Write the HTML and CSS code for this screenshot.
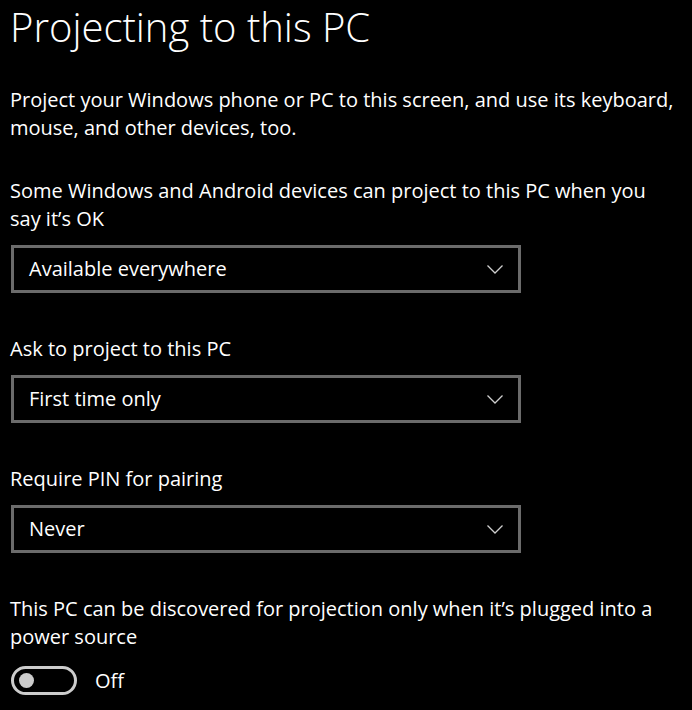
FILE: index.html
```html
<!DOCTYPE html>
<html lang="en">
<head>
    <meta charset="UTF-8">
    <meta name="viewport" content="width=device-width, initial-scale=1.0">
    <title>Projecting to this PC</title>
    <link rel="stylesheet" href="styles.css">
</head>
<body>
    <div class="page">
        <h1 class="title">Projecting to this PC</h1>

        <p class="intro">Project your Windows phone or PC to this screen, and use its keyboard, mouse, and other devices, too.</p>

        <!-- Settings -->
        <div class="setting">
            <p class="label">Some Windows and Android devices can project to this PC when you say it’s OK</p>
            <div class="dropdown">
                <span>Available everywhere</span>
                <svg class="chevron" width="16" height="9" viewBox="0 0 16 9"><path d="M0.5 0.5 L8 8 L15.5 0.5" fill="none" stroke="#cfcfcf" stroke-width="1.3"/></svg>
            </div>
        </div>

        <div class="setting">
            <p class="label">Ask to project to this PC</p>
            <div class="dropdown">
                <span>First time only</span>
                <svg class="chevron" width="16" height="9" viewBox="0 0 16 9"><path d="M0.5 0.5 L8 8 L15.5 0.5" fill="none" stroke="#cfcfcf" stroke-width="1.3"/></svg>
            </div>
        </div>

        <div class="setting">
            <p class="label">Require PIN for pairing</p>
            <div class="dropdown">
                <span>Never</span>
                <svg class="chevron" width="16" height="9" viewBox="0 0 16 9"><path d="M0.5 0.5 L8 8 L15.5 0.5" fill="none" stroke="#cfcfcf" stroke-width="1.3"/></svg>
            </div>
        </div>

        <div class="setting">
            <p class="label">This PC can be discovered for projection only when it’s plugged into a power source</p>
            <div class="toggle-row">
                <div class="toggle"><div class="knob"></div></div>
                <span>Off</span>
            </div>
        </div>
    </div>
</body>
</html>
```

FILE: styles.css
```css
* {
    box-sizing: border-box;
    margin: 0;
    padding: 0;
}

body {
    background-color: #000;
    color: #fff;
    font-family: 'Open Sans', 'Noto Sans', sans-serif;
    font-size: 20px;
    line-height: 28px;
}

.page {
    padding: 0 10px 0 10px;
}

.title {
    font-size: 40px;
    font-weight: 300;
    line-height: 54px;
    margin-bottom: 32px;
}

.intro {
    width: 670px;
}

.setting {
    margin-top: 35px;
}

.setting + .setting {
    margin-top: 42px;
}

.label {
    width: 660px;
}

.dropdown {
    display: flex;
    align-items: center;
    justify-content: space-between;
    width: 510px;
    height: 48px;
    margin-top: 12px;
    margin-left: 1px;
    padding: 0 15px 0 15px;
    border: 3px solid #6b6b6b;
}

.toggle-row {
    display: flex;
    align-items: center;
    gap: 18px;
    margin-top: 15px;
    margin-left: 1px;
}

.toggle {
    display: flex;
    align-items: center;
    width: 66px;
    height: 29px;
    padding-left: 5px;
    border: 3px solid #cccccc;
    border-radius: 15px;
}

.knob {
    width: 15px;
    height: 15px;
    border-radius: 50%;
    background: #cccccc;
}
```
